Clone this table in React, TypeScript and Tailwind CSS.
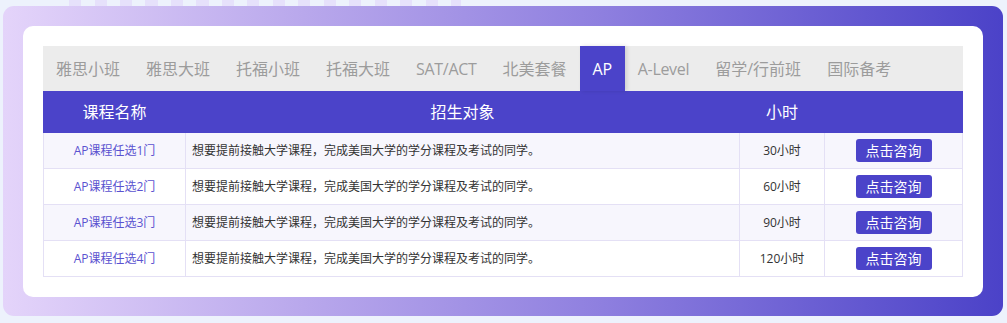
import React from "react";

const tabs = ["雅思小班", "雅思大班", "托福小班", "托福大班", "SAT/ACT", "北美套餐", "AP", "A-Level", "留学/行前班", "国际备考"];
const rows = [
  { name: "AP课程任选1门", hours: "30小时" },
  { name: "AP课程任选2门", hours: "60小时" },
  { name: "AP课程任选3门", hours: "90小时" },
  { name: "AP课程任选4门", hours: "120小时" },
];
const desc = "想要提前接触大学课程，完成美国大学的学分课程及考试的同学。";

export default function App() {
  return (
    <div
      className="w-[1007px] h-[323px] bg-[#edf2fc] px-[3px] overflow-hidden"
      style={{ fontFamily: '"Open Sans", "Noto Sans CJK SC", sans-serif' }}
    >
      <div className="h-[6px] ml-[66px] w-[392px] bg-[repeating-linear-gradient(90deg,#e6e1fb_0px,#e6e1fb_12px,transparent_12px,transparent_25.5px)]" />
      <div className="w-[1000px] h-[310px] rounded-[11px] p-[20px] bg-[linear-gradient(90deg,#e4d4fa_0%,#b9a8ec_30%,#8e7fdf_60%,#4b42c8_100%)]">
        <div className="bg-white rounded-[10px] p-[20px] h-[271px]">
          <div className="flex h-[45px] bg-[#ececec]">
            {tabs.map((t) => {
              const latin = /[A-Z]/.test(t);
              const base = "px-[13px] flex items-center text-[16px] " + (latin ? "tracking-[-0.3px] " : "");
              return (
                <div
                  key={t}
                  className={
                    t === "AP"
                      ? base + "bg-[#4b43c9] text-white shadow-[2px_0_4px_rgba(0,0,0,0.12)]"
                      : base + "text-[#9c9c9c]"
                  }
                >
                  {t}
                </div>
              );
            })}
          </div>
          <div className="grid grid-cols-[143px_553px_86px_138px] h-[42px] bg-[#4b43c9] text-white text-[16px] items-center text-center">
            <div>课程名称</div>
            <div>招生对象</div>
            <div>小时</div>
            <div></div>
          </div>
          {rows.map((r, i) => (
            <div
              key={r.name}
              className={
                (i % 2 === 0 ? "bg-[#f7f6fd] " : "bg-white ") +
                "grid grid-cols-[143px_553px_86px_138px] h-[36px] text-[12px] border-b border-[#e4e0f5]"
              }
            >
              <div className="flex items-center justify-center text-[#5a52d0] border-l border-r border-[#e4e0f5]">{r.name}</div>
              <div className="flex items-center pl-[6px] text-[#333]">{desc}</div>
              <div className="flex items-center justify-center text-[#333] border-l border-r border-[#e4e0f5]">{r.hours}</div>
              <div className="flex items-center justify-center border-r border-[#e4e0f5]">
                <div className="w-[76px] h-[23px] rounded-[3px] bg-[#4b43c9] text-white text-[14px] flex items-center justify-center">
                  点击咨询
                </div>
              </div>
            </div>
          ))}
        </div>
      </div>
    </div>
  );
}
